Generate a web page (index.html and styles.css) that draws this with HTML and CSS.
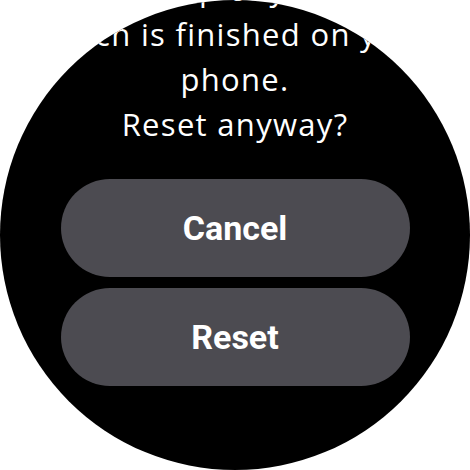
FILE: index.html
```html
<!DOCTYPE html>
<html lang="en">
<head>
    <meta charset="UTF-8">
    <meta name="viewport" content="width=device-width, initial-scale=1.0">
    <title>Reset watch</title>
    <link rel="stylesheet" href="styles.css">
</head>
<body>
    <div class="screen">
        <!-- Confirmation dialog, scrolled down to the actions -->
        <p class="message">Setup of your<br>watch is finished on your phone.<br>Reset anyway?</p>
        <div class="actions">
            <button class="chip">Cancel</button>
            <button class="chip">Reset</button>
        </div>
    </div>
</body>
</html>
```

FILE: styles.css
```css
body {
    margin: 0;
    background-color: white;
    font-family: Roboto, "Noto Sans", sans-serif;
}
.screen {
    width: 470px;
    height: 470px;
    border-radius: 50%;
    background-color: black;
    overflow: hidden;
    display: flex;
    flex-direction: column;
    justify-content: flex-end;
    align-items: center;
    padding-bottom: 84px;
    box-sizing: border-box;
}
.message {
    width: 420px;
    margin: 0 0 32px;
    color: white;
    font-family: "Open Sans", Roboto, sans-serif;
    font-size: 31px;
    letter-spacing: 1.3px;
    line-height: 45px;
    text-align: center;
    flex-shrink: 0;
}
.actions {
    display: flex;
    flex-direction: column;
    gap: 11px;
}
.chip {
    width: 349px;
    height: 98px;
    border: none;
    border-radius: 49px;
    background-color: #4c4b51;
    color: white;
    font-family: Roboto, sans-serif;
    font-size: 34px;
    font-weight: bold;
    cursor: pointer;
}
```
